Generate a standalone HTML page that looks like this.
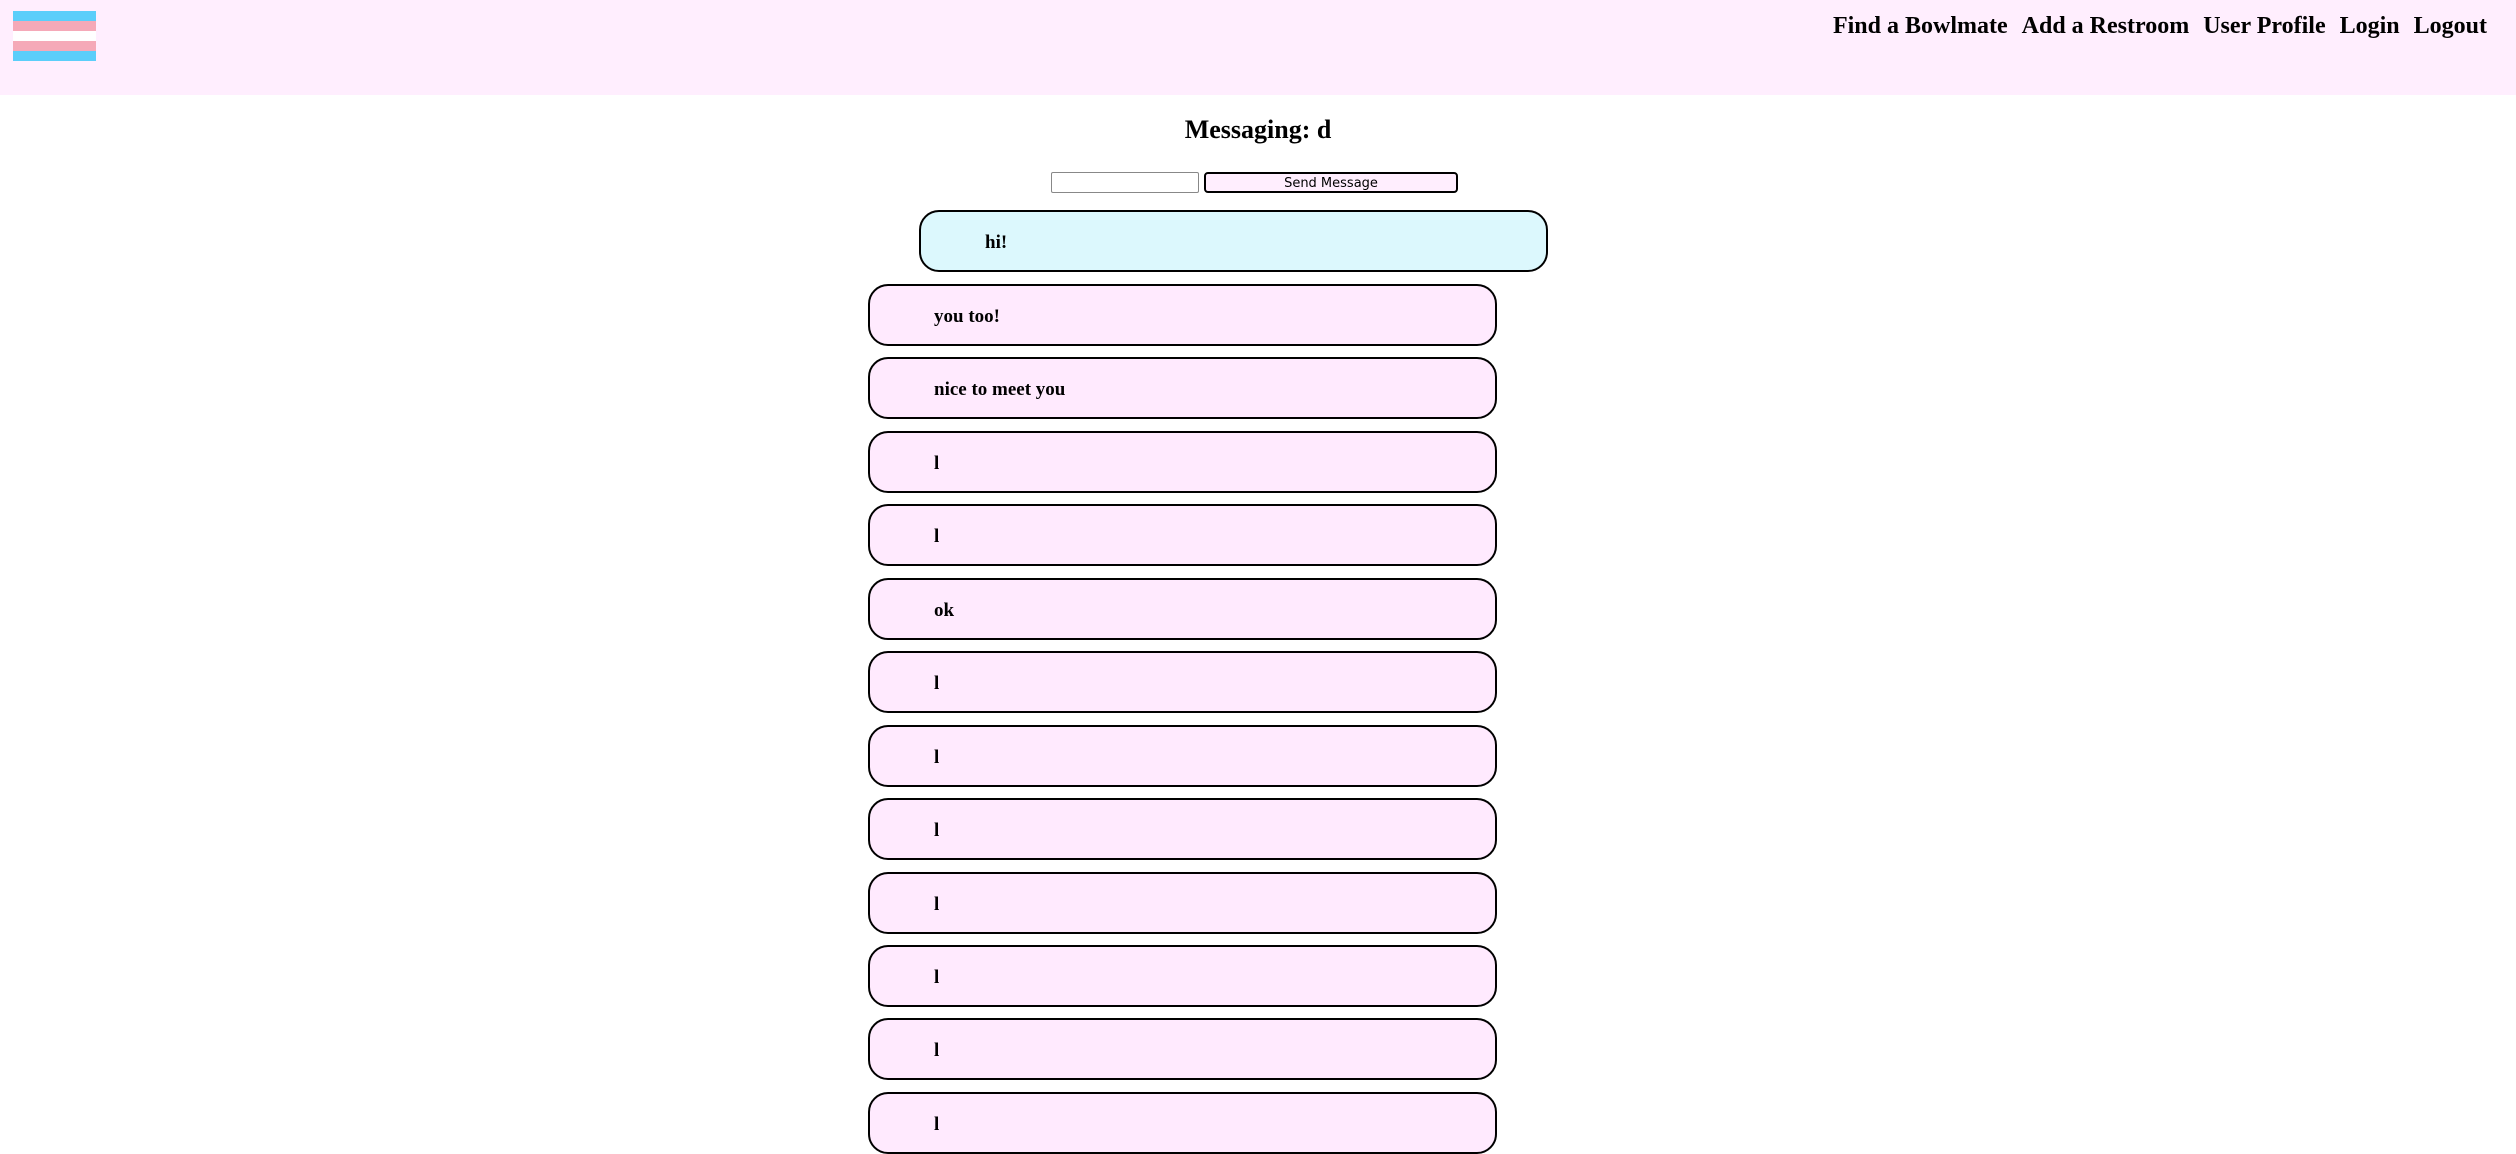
<!DOCTYPE html>
<html><head><style>
body{margin:0;width:2516px;height:1112px;overflow:hidden;background:#fff;font-family:"Liberation Serif",serif;position:relative}
.hdr{position:absolute;left:0;top:0;width:2516px;height:95px;background:#ffeefe}
.flag{position:absolute;left:13px;top:11px;width:83px}
.flag div{height:10px}
.nav{position:absolute;top:13px;right:29px;font-weight:bold;font-size:24px;word-spacing:0}
.nav span{margin-left:14px}
h1{position:absolute;top:115px;left:0;width:2516px;text-align:center;margin:0;font-size:26px;font-weight:bold}
.in{position:absolute;left:1051px;top:172px;width:146px;height:19px;border:1px solid #888;border-radius:2px;background:#fff}
.btn{position:absolute;left:1204px;top:172px;width:250px;height:17px;border:2px solid #000;border-radius:4px;background:#ffeefe;font-family:"DejaVu Sans",sans-serif;font-size:13px;text-align:center;line-height:19px}
.m{position:absolute;left:868px;width:625px;height:58px;border:2.5px solid #000;border-radius:20px;background:#ffeafe;box-sizing:content-box}
.m b{position:absolute;left:64px;top:20px;font-size:19px}
.blue{left:919px;background:#dcf8fd}
</style></head><body>
<div class="hdr">
<div class="flag"><div style="background:#5bcefa"></div><div style="background:#f5a9b8"></div><div style="background:#fff"></div><div style="background:#f5a9b8"></div><div style="background:#5bcefa"></div></div>
<div class="nav"><span>Find a Bowlmate</span><span>Add a Restroom</span><span>User Profile</span><span>Login</span><span>Logout</span></div>
</div>
<h1>Messaging: d</h1>
<div class="in"></div>
<div class="btn">Send Message</div>
<div class="m blue" style="top:210px"><b>hi!</b></div>
<div class="m" style="top:284px"><b>you too!</b></div>
<div class="m" style="top:357px"><b>nice to meet you</b></div>
<div class="m" style="top:431px"><b>l</b></div>
<div class="m" style="top:504px"><b>l</b></div>
<div class="m" style="top:578px"><b>ok</b></div>
<div class="m" style="top:651px"><b>l</b></div>
<div class="m" style="top:725px"><b>l</b></div>
<div class="m" style="top:798px"><b>l</b></div>
<div class="m" style="top:872px"><b>l</b></div>
<div class="m" style="top:945px"><b>l</b></div>
<div class="m" style="top:1018px"><b>l</b></div>
<div class="m" style="top:1092px"><b>l</b></div>
</body></html>
